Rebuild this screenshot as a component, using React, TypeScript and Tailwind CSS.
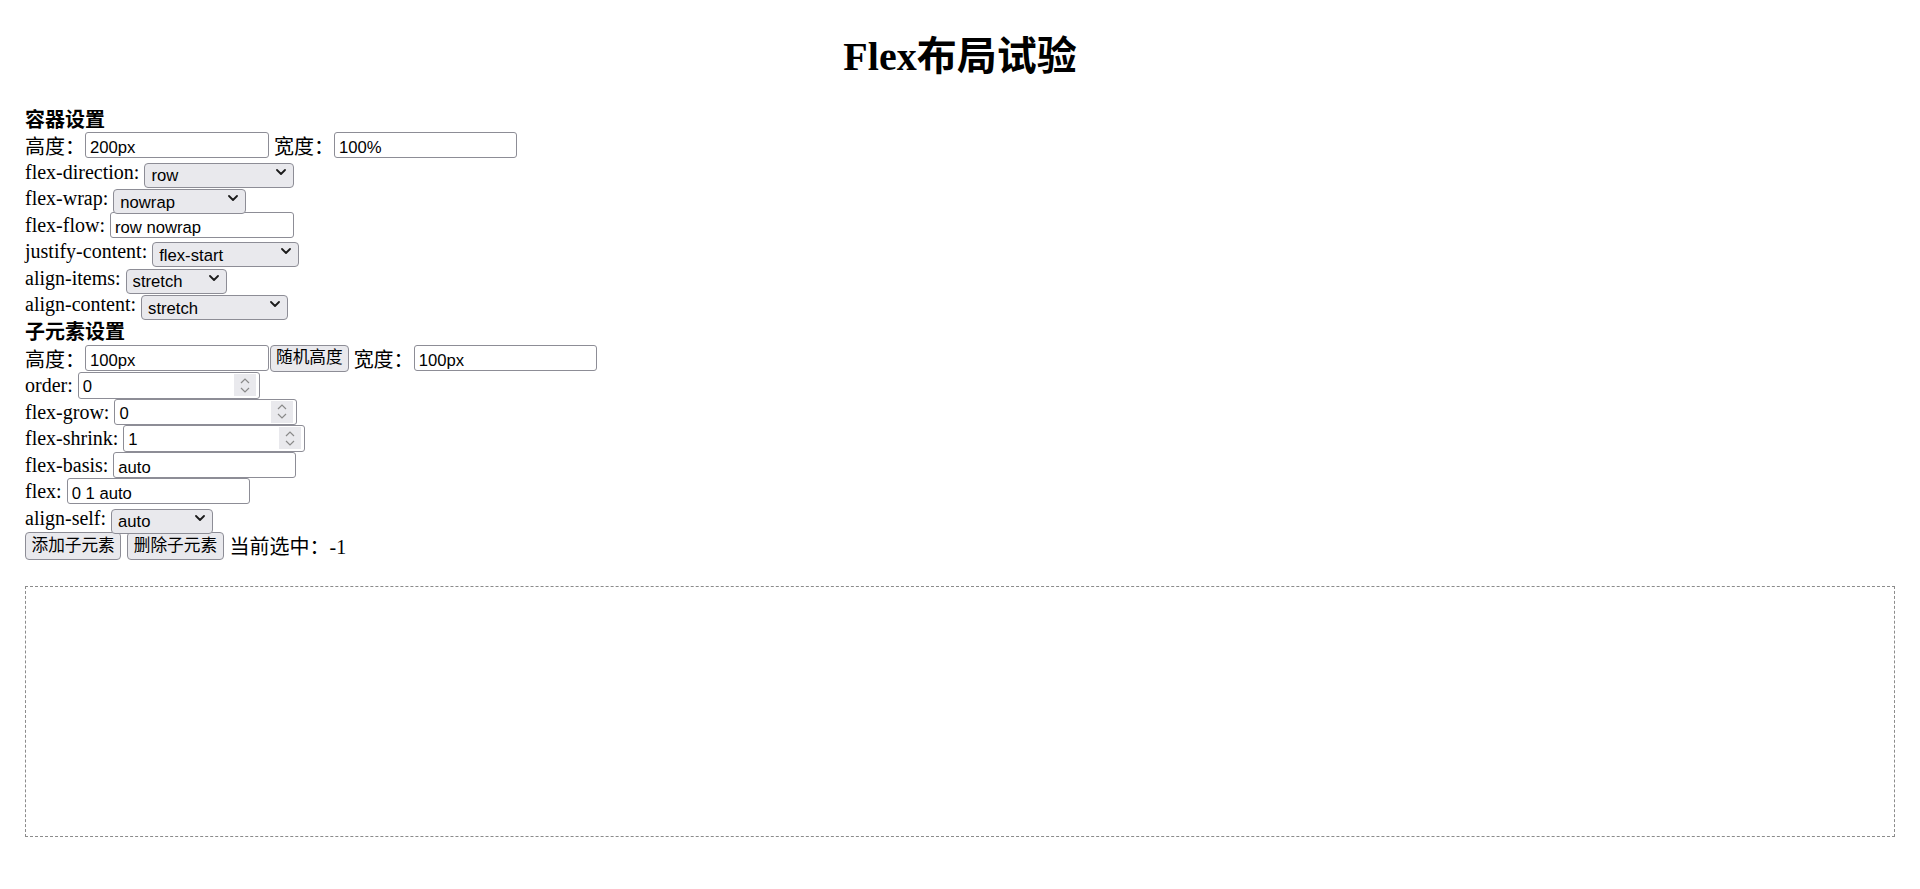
import React from 'react'

const serif = "font-['Liberation_Serif','Noto_Sans_CJK_SC',serif]"
const sans = "font-['Liberation_Sans','Noto_Sans_CJK_SC',sans-serif]"

const Chevron = () => (
  <svg width="10" height="6" viewBox="0 0 10 6" className="pointer-events-none absolute right-[8px] top-1/2 -translate-y-1/2">
    <polyline points="1,1 5,5 9,1" fill="none" stroke="#1b1b1b" strokeWidth="1.8" strokeLinecap="round" strokeLinejoin="round" />
  </svg>
)

interface BoxProps {
  value: string
  width: string
}

const TextBox = ({ value, width }: BoxProps) => (
  <input
    type="text"
    defaultValue={value}
    className={`${width} ${sans} h-[26px] rounded-[3px] border border-[#8d8d96] bg-white px-[4px] pt-[6px] text-[16.67px] leading-[18px] text-black outline-none`}
  />
)

const NumberBox = ({ value, width }: BoxProps) => (
  <div className={`${width} flex h-[26.5px] items-center rounded-[3px] border border-[#8d8d96] bg-white pl-[4px] pr-[3px]`}>
    <input
      type="text"
      defaultValue={value}
      className={`${sans} mt-[4px] h-[18px] min-w-0 flex-1 bg-transparent text-[16.67px] leading-[18px] text-black outline-none`}
    />
    <div className="flex h-[22px] w-[22px] flex-col items-center justify-center gap-[3px] bg-[#e9e9ed]">
      <svg width="10" height="6" viewBox="0 0 10 6">
        <polyline points="1,5 5,1 9,5" fill="none" stroke="#8a8a8a" strokeWidth="1.2" />
      </svg>
      <svg width="10" height="6" viewBox="0 0 10 6">
        <polyline points="1,1 5,5 9,1" fill="none" stroke="#8a8a8a" strokeWidth="1.2" />
      </svg>
    </div>
  </div>
)

interface SelectProps {
  value: string
  options: string[]
  width: string
}

const Select = ({ value, options, width }: SelectProps) => (
  <div className={`${width} relative h-[25px]`}>
    <select
      defaultValue={value}
      className={`${sans} h-full w-full appearance-none rounded-[4px] border border-[#8d8d96] bg-[#e9e9ed] pl-[6px] pt-[1.5px] text-[16.67px] leading-[21.5px] text-black outline-none`}
    >
      {options.map((o) => (
        <option key={o}>{o}</option>
      ))}
    </select>
    <Chevron />
  </div>
)

// cjk labels sit a little lower in the original
const Label = ({ text, cjk }: { text: string; cjk?: boolean }) => (
  <span className={cjk ? 'whitespace-pre pt-[3.5px] leading-[22px]' : 'whitespace-pre leading-[22px]'}>{text}</span>
)

const Row = ({ children }: { children: React.ReactNode }) => (
  <div className="flex h-[26.5px] items-center">{children}</div>
)

const Btn = ({ text, extra }: { text: string; extra: string }) => (
  <button
    type="button"
    className={`${sans} ${extra} rounded-[4px] border border-[#8d8d96] bg-[#e9e9ed] text-[16.67px] leading-[20px] text-black`}
  >
    {text}
  </button>
)

export default function App() {
  return (
    <div className={`${serif} min-h-screen bg-white px-[25px] text-[20px] text-black`}>
      <h1 className="h-[108px] pt-[33.5px] text-center text-[40px] font-bold leading-[46px]">Flex布局试验</h1>

      <div className="h-[24px] pt-[1px] font-bold leading-[23px]">容器设置</div>
      <Row>
        <Label text="高度：" cjk />
        <TextBox value="200px" width="w-[184px]" />
        <Label text=" 宽度：" cjk />
        <TextBox value="100%" width="w-[183px]" />
      </Row>
      <Row>
        <Label text="flex-direction: " />
        <Select value="row" options={['row', 'row-reverse', 'column', 'column-reverse']} width="w-[150px]" />
      </Row>
      <Row>
        <Label text="flex-wrap: " />
        <Select value="nowrap" options={['nowrap', 'wrap', 'wrap-reverse']} width="w-[133px]" />
      </Row>
      <Row>
        <Label text="flex-flow: " />
        <TextBox value="row nowrap" width="w-[184px]" />
      </Row>
      <Row>
        <Label text="justify-content: " />
        <Select value="flex-start" options={['flex-start', 'flex-end', 'center', 'space-between', 'space-around']} width="w-[147px]" />
      </Row>
      <Row>
        <Label text="align-items: " />
        <Select value="stretch" options={['stretch', 'flex-start', 'flex-end', 'center', 'baseline']} width="w-[101px]" />
      </Row>
      <Row>
        <Label text="align-content: " />
        <Select value="stretch" options={['stretch', 'flex-start', 'flex-end', 'center', 'space-between', 'space-around']} width="w-[147px]" />
      </Row>

      <div className="h-[27px] pt-[2.5px] font-bold leading-[24.5px]">子元素设置</div>
      <div className="flex h-[27.5px] items-center">
        <Label text="高度：" cjk />
        <TextBox value="100px" width="w-[184px]" />
        <span className="ml-[1px]" />
        <Btn text="随机高度" extra="h-[27.5px] px-[5px]" />
        <Label text=" 宽度：" cjk />
        <TextBox value="100px" width="w-[183px]" />
      </div>
      <Row>
        <Label text="order: " />
        <NumberBox value="0" width="w-[182px]" />
      </Row>
      <Row>
        <Label text="flex-grow: " />
        <NumberBox value="0" width="w-[183px]" />
      </Row>
      <Row>
        <Label text="flex-shrink: " />
        <NumberBox value="1" width="w-[182px]" />
      </Row>
      <Row>
        <Label text="flex-basis: " />
        <TextBox value="auto" width="w-[183px]" />
      </Row>
      <Row>
        <Label text="flex: " />
        <TextBox value="0 1 auto" width="w-[183px]" />
      </Row>
      <Row>
        <Label text="align-self: " />
        <Select value="auto" options={['auto', 'flex-start', 'flex-end', 'center', 'baseline', 'stretch']} width="w-[102px]" />
      </Row>
      <div className="flex h-[30px] items-center gap-[6px]">
        <Btn text="添加子元素" extra="h-[28.5px] px-[5.5px]" />
        <Btn text="删除子元素" extra="h-[28.5px] px-[5.5px]" />
        <span className="whitespace-pre pt-[2px] leading-[22px]">当前选中：-1</span>
      </div>

      <div className="mt-[24.5px] h-[251px] border border-dashed border-[#8c8c8c]" />
    </div>
  )
}
